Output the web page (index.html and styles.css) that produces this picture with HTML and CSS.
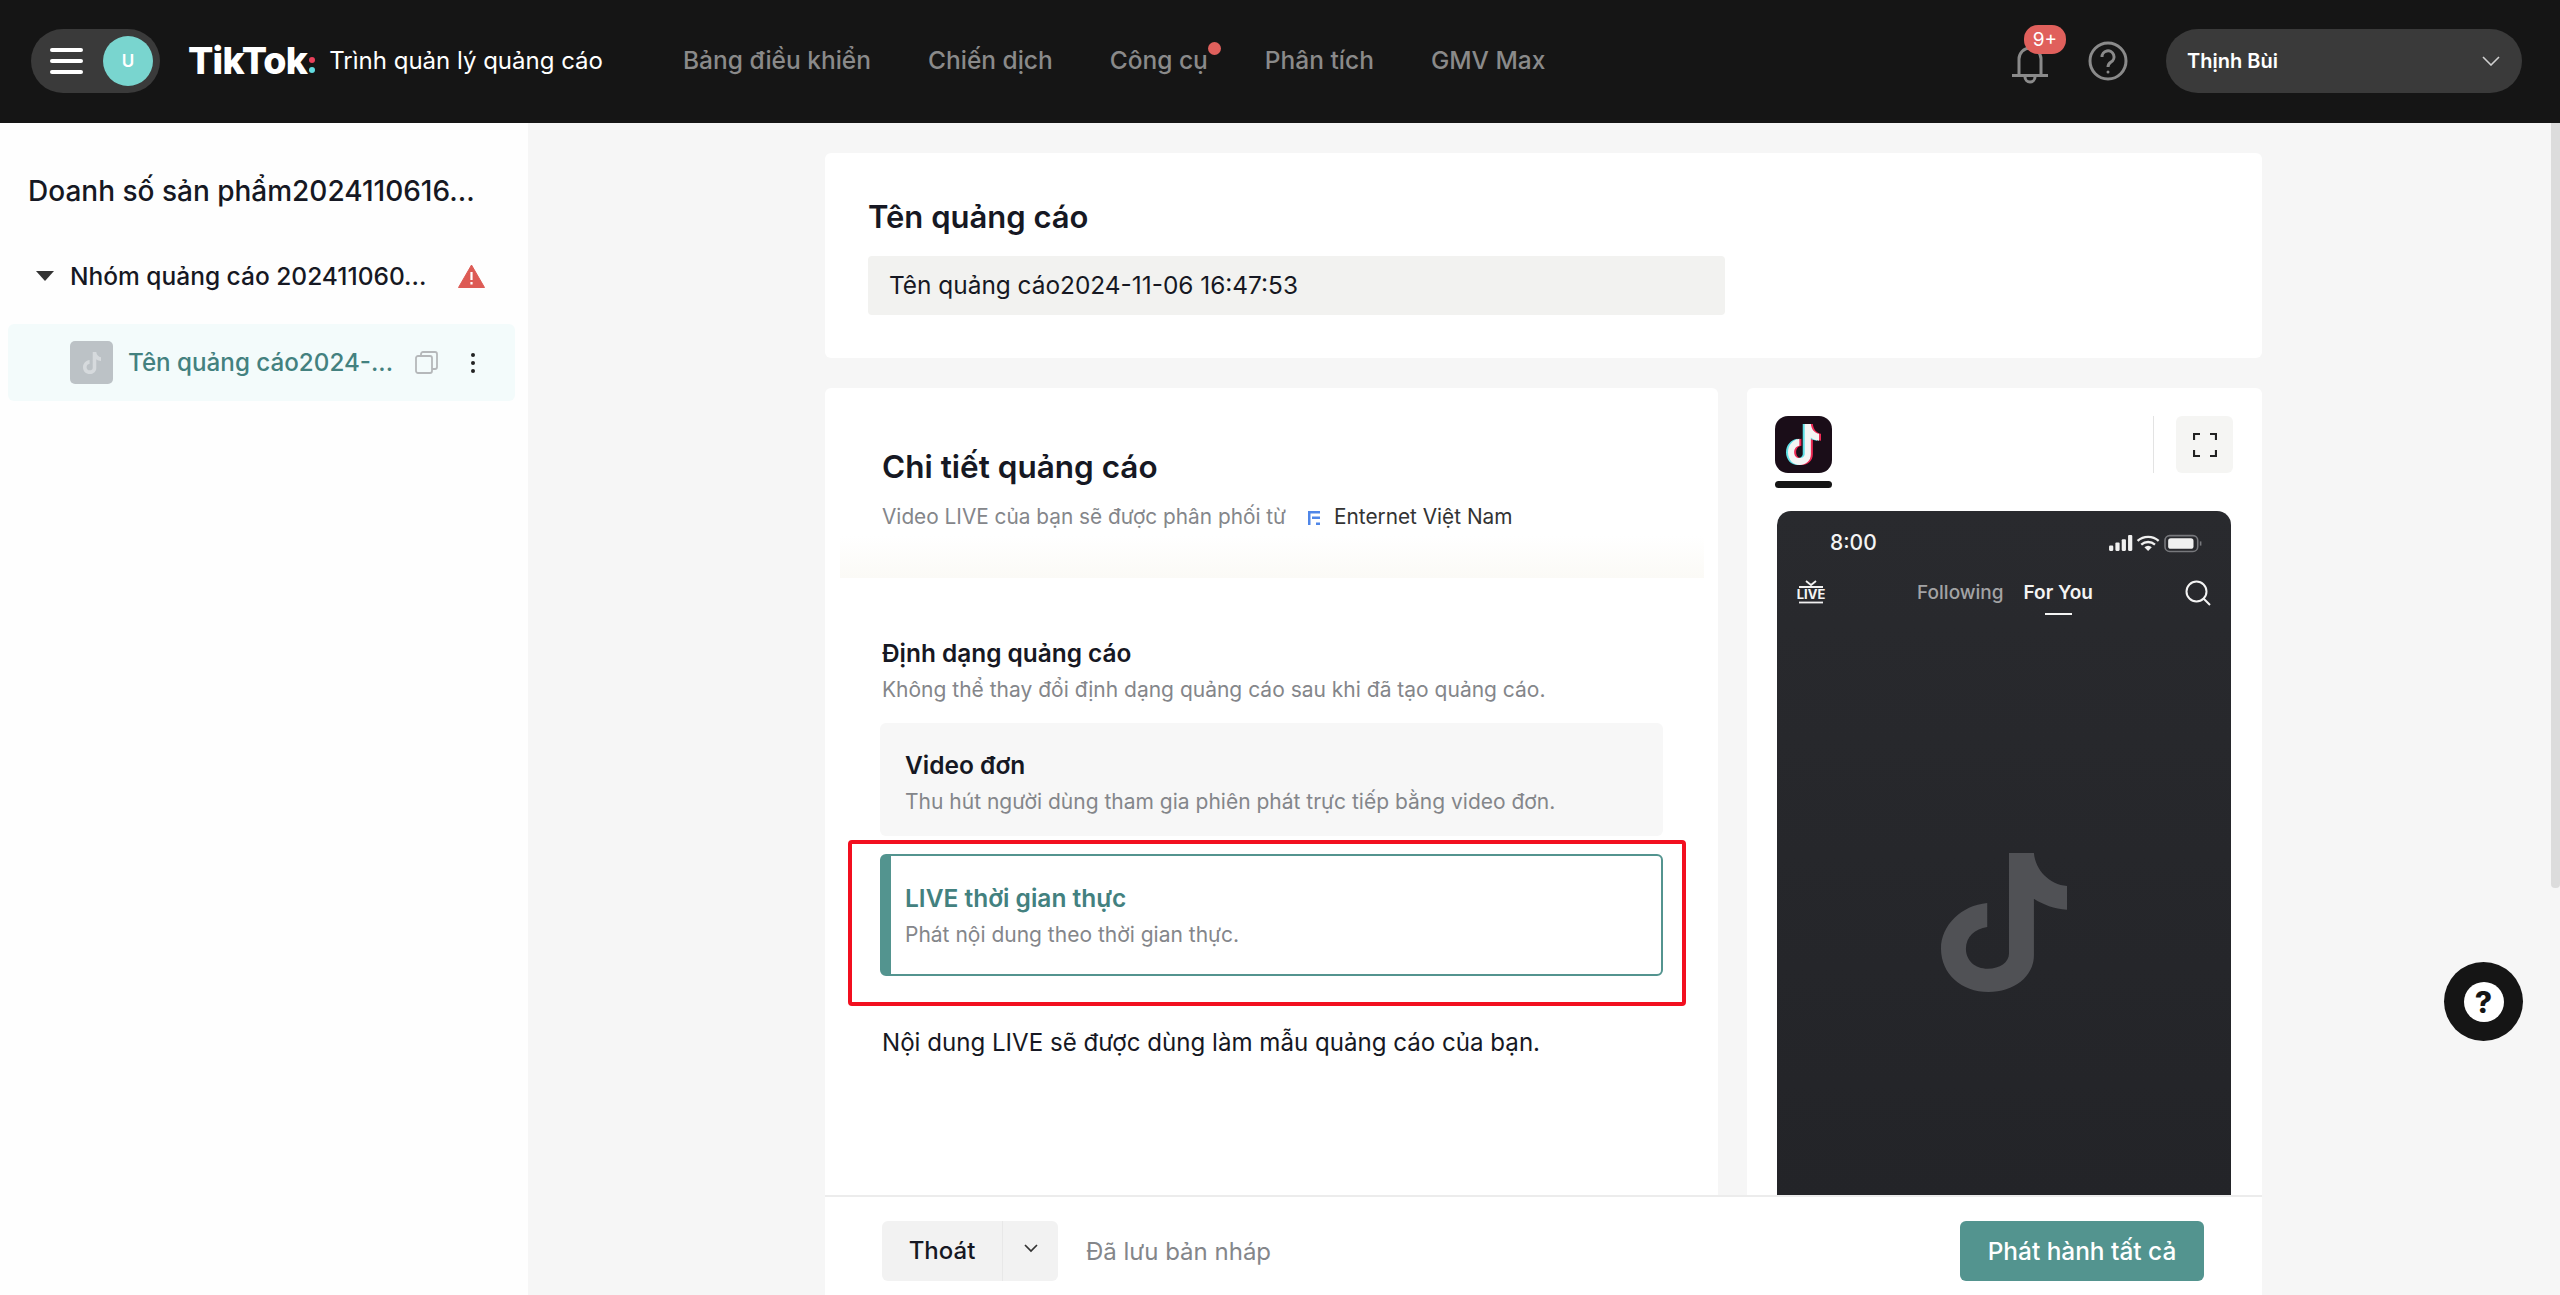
FILE: index.html
```html
<!DOCTYPE html>
<html>
  <head>
    <meta charset="UTF-8" />
    <title>TikTok: Trình quản lý quảng cáo</title>
    <link rel="stylesheet" href="styles.css">
  </head>
  <body>
    <svg class="sprite" width="0" height="0">
      <symbol id="note" viewBox="0 0 278 417" preserveAspectRatio="none">
        <path d="M150 0H205C208 52 240 95 278 99V170C250 167 225 155 205 137V307C205 372 160 417 105 417C45 417 0 362 0 287C0 217 45 157 102 150V222C75 227 55 252 55 287C55 322 75 347 103 347C130 347 150 327 150 302Z" />
      </symbol>
    </svg>

    <header class="topbar">
      <div class="topbar__pill">
        <div class="burger"><span></span><span></span><span></span></div>
        <div class="avatar">U</div>
      </div>
      <div class="brand">
        <span class="brand__logo">TikTok</span>
        <span class="brand__dots"><i></i><i></i></span>
        <span class="brand__text">Trình quản lý quảng cáo</span>
      </div>
      <nav class="nav">
        <a class="nav__item">Bảng điều khiển</a>
        <a class="nav__item">Chiến dịch</a>
        <a class="nav__item nav__item--dot">Công cụ</a>
        <a class="nav__item">Phân tích</a>
        <a class="nav__item">GMV Max</a>
      </nav>
      <div class="topbar__right">
        <div class="bell">
          <svg width="40" height="44" viewBox="0 0 40 44" fill="none" stroke="#8a8a8a" stroke-width="3">
            <path d="M9 33V17a11 11 0 0 1 22 0V33" />
            <path d="M2 33.5H38" />
            <path d="M15 35a5 5 0 0 0 10 0" />
          </svg>
          <span class="bell__badge">9+</span>
        </div>
        <svg class="help" width="40" height="40" viewBox="0 0 40 40" fill="none" stroke="#8a8a8a" stroke-width="3">
          <circle cx="20" cy="20" r="18" />
          <path d="M14 16a6 6 0 1 1 9 5c-2 1.300-3 2-3 5" />
          <circle cx="20" cy="31" r="1.500" fill="#8a8a8a" stroke="none" />
        </svg>
        <div class="user">
          <span class="user__name">Thịnh Bùi</span>
          <svg width="18" height="10" viewBox="0 0 18 10" fill="none" stroke="#d0d0d0" stroke-width="1.600"><path d="M1 1l8 8 8-8" /></svg>
        </div>
      </div>
    </header>

    <div class="page">
      <aside class="side">
        <h2 class="side__title">Doanh số sản phẩm2024110616...</h2>
        <div class="side__group">
          <span class="caret"></span>
          <span class="side__group-name">Nhóm quảng cáo 202411060...</span>
          <svg class="warn" width="27" height="24" viewBox="0 0 27 24">
            <path d="M13.500 1L26.500 23.500H.5Z" fill="#dd5b55" stroke="#dd5b55" stroke-linejoin="round" stroke-width="1" />
            <path d="M13.500 8v8M13.500 18v2.500" stroke="#fff" stroke-width="2.200" />
          </svg>
        </div>
        <div class="side__ad">
          <span class="side__thumb">
            <svg width="18" height="22" fill="#d6dadd"><use href="#note" /></svg>
          </span>
          <span class="side__ad-name">Tên quảng cáo2024-...</span>
          <svg class="side__copy" width="23" height="23" viewBox="0 0 23 23" fill="none" stroke="#b5b8ba" stroke-width="1.800">
            <rect x="1" y="5" width="16" height="17" rx="2" />
            <path d="M6 5V3a2 2 0 0 1 2-2h12a2 2 0 0 1 2 2v13a2 2 0 0 1-2 2h-3" />
          </svg>
          <span class="side__more"><i></i><i></i><i></i></span>
        </div>
      </aside>

      <main class="main">
        <div class="main__scroll">
          <section class="card card--name">
            <h2 class="card__title card__title--name">Tên quảng cáo</h2>
            <div class="field">Tên quảng cáo2024-11-06 16:47:53</div>
          </section>

          <div class="columns">
            <section class="card card--detail">
              <h2 class="card__title">Chi tiết quảng cáo</h2>
              <p class="detail__sub">
                <span>Video LIVE của bạn sẽ được phân phối từ</span>
                <svg class="detail__mark" width="14" height="16" viewBox="0 0 14 16" fill="#4f86e8">
                  <path d="M1 1h12v2.500H3.500V15H1zM5 6.500h8V9H5zM9 12.500h4V15H9z" />
                </svg>
                <span class="detail__org">Enternet Việt Nam</span>
              </p>
              <div class="detail__band"></div>
              <h3 class="detail__head">Định dạng quảng cáo</h3>
              <p class="detail__desc">Không thể thay đổi định dạng quảng cáo sau khi đã tạo quảng cáo.</p>
              <div class="option">
                <div class="option__name">Video đơn</div>
                <div class="option__desc">Thu hút người dùng tham gia phiên phát trực tiếp bằng video đơn.</div>
              </div>
              <div class="option option--active">
                <div class="option__name">LIVE thời gian thực</div>
                <div class="option__desc">Phát nội dung theo thời gian thực.</div>
                <div class="option__mark"></div>
              </div>
              <p class="detail__note">Nội dung LIVE sẽ được dùng làm mẫu quảng cáo của bạn.</p>
            </section>

            <section class="card card--preview">
              <div class="preview__bar">
                <div class="preview__tab">
                  <span class="app-icon">
                    <svg class="app-icon__red" width="31" height="41" fill="#ee2a55"><use href="#note" /></svg>
                    <svg class="app-icon__cyan" width="31" height="41" fill="#5fe0e6"><use href="#note" /></svg>
                    <svg class="app-icon__white" width="31" height="41" fill="#f4f4f4"><use href="#note" /></svg>
                  </span>
                  <span class="preview__underline"></span>
                </div>
                <div class="preview__tools">
                  <span class="preview__divider"></span>
                  <span class="expand">
                    <svg width="24" height="24" viewBox="0 0 24 24" fill="none" stroke="#222" stroke-width="2.200">
                      <path d="M1 7V1H7M17 1H23V7M23 17V23H17M7 23H1V17" />
                    </svg>
                  </span>
                </div>
              </div>
              <div class="phone">
                <div class="phone__status">
                  <span class="phone__time">8:00</span>
                  <svg width="95" height="19" viewBox="0 0 88 18" fill="#f0f0f0">
                    <rect x="0" y="11" width="4" height="5" rx="1" />
                    <rect x="6" y="8" width="4" height="8" rx="1" />
                    <rect x="12" y="5" width="4" height="11" rx="1" />
                    <rect x="18" y="1" width="4" height="15" rx="1" />
                    <path d="M27 6.500a15 15 0 0 1 20 0M30.500 10a10 10 0 0 1 13 0" fill="none" stroke="#f0f0f0" stroke-width="2.200" />
                    <path d="M37 16l-3.500-3.500a5 5 0 0 1 7 0z" />
                    <rect x="53" y="1.500" width="31" height="15" rx="4.500" fill="none" stroke="#77787c" stroke-width="1.500" />
                    <rect x="56" y="4" width="24" height="10" rx="2.500" />
                    <rect x="86" y="7" width="1.500" height="4" fill="#77787c" />
                  </svg>
                </div>
                <div class="phone__nav">
                  <span class="live-icon">
                    <svg width="28" height="8" viewBox="0 0 28 8" fill="none" stroke="#f0f0f0" stroke-width="1.800"><path d="M9 1l5 4 5-4M2 7h24" /></svg>
                    <span class="live-icon__text">LIVE</span>
                    <svg width="28" height="3" viewBox="0 0 28 3" fill="none" stroke="#f0f0f0" stroke-width="1.800"><path d="M2 1.500h24" /></svg>
                  </span>
                  <div class="phone__tabs">
                    <span class="phone__tab">Following</span>
                    <span class="phone__tab phone__tab--on">For You</span>
                  </div>
                  <svg width="26" height="26" viewBox="0 0 26 26" fill="none" stroke="#f4f4f4" stroke-width="2">
                    <circle cx="11.500" cy="11.500" r="10" />
                    <path d="M18.500 18.500L25 25" />
                  </svg>
                </div>
                <div class="phone__body">
                  <svg width="126" height="139" fill="#505155"><use href="#note" /></svg>
                </div>
              </div>
            </section>
          </div>
        </div>

        <footer class="footer">
          <div class="exit">
            <span class="exit__label">Thoát</span>
            <span class="exit__arrow">
              <svg width="14" height="9" viewBox="0 0 14 9" fill="none" stroke="#333" stroke-width="1.700"><path d="M1 1l6 6 6-6" /></svg>
            </span>
          </div>
          <span class="footer__saved">Đã lưu bản nháp</span>
          <button class="publish">Phát hành tất cả</button>
        </footer>
      </main>
    </div>

    <div class="scrollthumb"></div>
    <div class="helpdesk">
      <span class="helpdesk__mark">?</span>
    </div>
  </body>
</html>
```

FILE: styles.css
```css
:root {
  --color-dark: #151515;
  --color-pill: #3a3a3a;
  --color-nav: #8a8a8a;
  --color-main: #161823;
  --color-optional: #84868a;
  --color-teal: #53948f;
  --color-teal-text: #43817f;
  --color-bg: #f6f6f6;
}

* {
  box-sizing: border-box;
  margin: 0;
  padding: 0;
}

html,
body {
  height: 100%;
  overflow: hidden;
}

body {
  background-color: var(--color-bg);
  color: var(--color-main);
  font-family: Inter, "Noto Sans", sans-serif;
  display: flex;
  flex-direction: column;
}

.sprite {
  position: absolute;
}

/* top bar */
.topbar {
  height: 123px;
  flex-shrink: 0;
  background-color: var(--color-dark);
  display: flex;
  align-items: center;
  padding: 0 38px 2px 31px;
}

.topbar__pill {
  width: 129px;
  height: 64px;
  border-radius: 32px;
  background-color: var(--color-pill);
  display: flex;
  align-items: center;
  padding: 0 7px 0 19px;
  justify-content: space-between;
}

.burger {
  width: 33px;
  display: flex;
  flex-direction: column;
  gap: 7px;
}

.burger span {
  height: 4px;
  border-radius: 2px;
  background-color: #fff;
}

.avatar {
  width: 50px;
  height: 50px;
  border-radius: 50%;
  background-color: #79d5cf;
  color: #fff;
  font-size: 17px;
  font-weight: 600;
  display: flex;
  align-items: center;
  justify-content: center;
}

.brand {
  display: flex;
  align-items: center;
  margin-left: 28px;
  width: 495px;
}

.brand__logo {
  color: #fff;
  font-size: 37.5px;
  font-weight: 800;
  letter-spacing: -0.8px;
  line-height: 44px;
}

.brand__dots {
  display: flex;
  flex-direction: column;
  gap: 4px;
  margin: 8px 14px 0 2px;
}

.brand__dots i {
  width: 6px;
  height: 6px;
  border-radius: 50%;
  background-color: #e8405a;
}

.brand__dots i + i {
  background-color: #62dbe0;
}

.brand__text {
  color: #fff;
  font-size: 24px;
}

.nav {
  display: flex;
  align-items: center;
  gap: 57px;
  margin-top: -2px;
}

.nav__item {
  color: var(--color-nav);
  font-size: 24.5px;
  font-weight: 500;
  position: relative;
}

.nav__item--dot::after {
  content: "";
  position: absolute;
  width: 13px;
  height: 13px;
  border-radius: 50%;
  background-color: #e0605c;
  top: -3px;
  right: -13px;
}

.topbar__right {
  margin-left: auto;
  display: flex;
  align-items: center;
}

.bell {
  position: relative;
  width: 40px;
  height: 44px;
  margin-top: 6px;
}

.bell__badge {
  position: absolute;
  left: 14px;
  top: -17px;
  width: 42px;
  height: 29px;
  border-radius: 14px;
  background-color: #e0605c;
  color: #fff;
  font-size: 19px;
  line-height: 29px;
  text-align: center;
}

.help {
  margin-left: 38px;
}

.user {
  margin-left: 38px;
  width: 356px;
  height: 64px;
  border-radius: 32px;
  background-color: var(--color-pill);
  display: flex;
  align-items: center;
  justify-content: space-between;
  padding: 0 22px 0 21px;
}

.user__name {
  color: #fff;
  font-size: 20px;
  font-weight: 600;
}

/* sidebar */
.page {
  flex: 1;
  display: flex;
  min-height: 0;
}

.side {
  width: 528px;
  flex-shrink: 0;
  background-color: #fefefe;
  padding: 0 13px 0 8px;
}

.side__title {
  font-size: 28px;
  font-weight: 500;
  line-height: 34px;
  padding: 51px 0 0 20px;
  white-space: nowrap;
}

.side__group {
  display: flex;
  align-items: center;
  height: 40px;
  margin-top: 48px;
  padding-left: 28px;
}

.caret {
  width: 0;
  height: 0;
  border-left: 9px solid transparent;
  border-right: 9px solid transparent;
  border-top: 10px solid #333;
}

.side__group-name {
  font-size: 24.5px;
  font-weight: 500;
  margin-left: 16px;
  white-space: nowrap;
}

.warn {
  margin-left: auto;
  margin-right: 30px;
}

.side__ad {
  height: 77px;
  margin-top: 28px;
  background-color: #f3fbfb;
  border-radius: 6px;
  display: flex;
  align-items: center;
  padding-left: 62px;
}

.side__thumb {
  width: 43px;
  height: 43px;
  border-radius: 5px;
  background-color: #bcc2c6;
  display: flex;
  align-items: center;
  justify-content: center;
}

.side__ad-name {
  color: var(--color-teal-text);
  font-size: 24.2px;
  font-weight: 500;
  margin-left: 15px;
  white-space: nowrap;
}

.side__copy {
  margin-left: auto;
}

.side__more {
  display: flex;
  flex-direction: column;
  gap: 4px;
  margin: 0 40px 0 33px;
}

.side__more i {
  width: 4px;
  height: 4px;
  border-radius: 50%;
  background-color: #222;
}

/* main column */
.main {
  width: 1437px;
  margin-left: 297px;
  display: flex;
  flex-direction: column;
  min-height: 0;
}

.main__scroll {
  flex: 1;
  min-height: 0;
  overflow: hidden;
  padding-top: 30px;
}

.card {
  background-color: #fff;
  border-radius: 6px;
}

.card__title {
  font-size: 31.5px;
  font-weight: 600;
  line-height: 40px;
}

.card__title--name {
  font-size: 31px;
}

.card--name {
  height: 205px;
  padding: 44px 43px 0;
}

.field {
  margin-top: 19px;
  width: 857px;
  height: 59px;
  border-radius: 4px;
  background-color: #f2f2f0;
  font-size: 24.4px;
  line-height: 59px;
  padding-left: 21px;
}

.columns {
  display: flex;
  gap: 29px;
  margin-top: 30px;
  align-items: flex-start;
}

.card--detail {
  width: 893px;
  height: 900px;
  padding: 59px 0 0 57px;
  position: relative;
}

.detail__sub {
  margin-top: 14px;
  font-size: 20.8px;
  line-height: 32px;
  color: var(--color-optional);
  display: flex;
  align-items: center;
}

.detail__mark {
  margin: 2px 13px 0 21px;
}

.detail__org {
  color: #333;
}

.detail__band {
  height: 42px;
  margin: 3px 14px 0 -42px;
  background: linear-gradient(#fff, #fbfaf6);
}

.detail__head {
  font-size: 24.4px;
  font-weight: 600;
  line-height: 32px;
  margin-top: 59px;
}

.detail__desc {
  font-size: 21px;
  line-height: 30px;
  margin-top: 6px;
  color: var(--color-optional);
}

.option {
  width: 783px;
  height: 113px;
  margin-top: 18px;
  margin-left: -2px;
  border-radius: 6px;
  background-color: #f7f7f7;
  padding: 26px 0 0 25px;
}

.option__name {
  font-size: 24.5px;
  font-weight: 600;
  line-height: 32px;
}

.option__desc {
  font-size: 21px;
  line-height: 30px;
  margin-top: 6px;
  color: var(--color-optional);
}

.option--active {
  position: relative;
  height: 122px;
  background-color: #fff;
  border: 2px solid var(--color-teal);
  border-left-width: 11px;
  padding: 26px 0 0 14px;
}

.option--active .option__name {
  color: var(--color-teal-text);
}

/* the red box someone drew on the screenshot */
.option__mark {
  position: absolute;
  left: -43px;
  top: -16px;
  right: -25px;
  bottom: -32px;
  border: 4px solid #f20f1f;
  border-radius: 4px;
}

.detail__note {
  font-size: 24.1px;
  line-height: 32px;
  margin-top: 51px;
}

/* preview */
.card--preview {
  width: 515px;
  height: 900px;
  padding: 28px 29px 0 28px;
}

.preview__bar {
  display: flex;
  justify-content: space-between;
}

.preview__tab {
  width: 57px;
}

.app-icon {
  width: 57px;
  height: 57px;
  border-radius: 13px;
  background-color: #1a0d18;
  display: block;
  position: relative;
}

.app-icon svg {
  position: absolute;
  top: 8px;
}

.app-icon__red {
  left: 15px;
}

.app-icon__cyan {
  left: 11px;
}

.app-icon__white {
  left: 13px;
}

.preview__underline {
  display: block;
  height: 7px;
  border-radius: 4px;
  margin-top: 8px;
  background-color: var(--color-dark);
}

.preview__tools {
  display: flex;
  gap: 22px;
}

.preview__divider {
  width: 1px;
  height: 57px;
  background-color: #e3e3e3;
}

.expand {
  width: 57px;
  height: 57px;
  border-radius: 6px;
  background-color: #f5f5f3;
  display: flex;
  align-items: center;
  justify-content: center;
}

.phone {
  margin-top: 23px;
  margin-left: 2px;
  width: 454px;
  height: 800px;
  border-radius: 14px 14px 0 0;
  background: linear-gradient(#292a2e, #222327);
  color: #f4f4f4;
}

.phone__status {
  display: flex;
  align-items: center;
  justify-content: space-between;
  padding: 18px 28px 0 53px;
}

.phone__time {
  font-size: 21px;
  font-weight: 500;
  line-height: 28px;
}

.phone__nav {
  display: flex;
  align-items: flex-start;
  justify-content: space-between;
  margin-top: 23px;
  padding: 0 20px;
  height: 50px;
}

.live-icon {
  display: flex;
  flex-direction: column;
  align-items: center;
  width: 28px;
}

.live-icon__text {
  font-size: 13px;
  font-weight: 700;
  line-height: 13px;
}

.phone__tabs {
  display: flex;
  gap: 20px;
}

.phone__tab {
  font-size: 19px;
  line-height: 26px;
  font-weight: 500;
  color: #a3a3a5;
  position: relative;
}

.phone__tab--on {
  color: #f4f4f4;
  font-weight: 600;
}

.phone__tab--on::after {
  content: "";
  position: absolute;
  left: 21px;
  right: 21px;
  bottom: -9px;
  height: 2px;
  background-color: #f4f4f4;
}

.phone__body {
  display: flex;
  justify-content: center;
  padding: 223px 0 0 0;
}

/* footer */
.footer {
  height: 100px;
  flex-shrink: 0;
  background-color: #fff;
  border-top: 2px solid #ececec;
  display: flex;
  align-items: center;
  padding: 10px 58px 0 57px;
}

.exit {
  display: flex;
  height: 60px;
  width: 176px;
  border-radius: 6px;
  background-color: #f2f2f2;
}

.exit__label {
  width: 121px;
  font-size: 24px;
  font-weight: 500;
  line-height: 60px;
  text-align: center;
  border-right: 1px solid #e8e8e8;
}

.exit__arrow {
  flex: 1;
  display: flex;
  align-items: center;
  justify-content: center;
  padding-bottom: 6px;
}

.footer__saved {
  margin-left: 28px;
  font-size: 24px;
  color: var(--color-optional);
}

.publish {
  margin-left: auto;
  width: 244px;
  height: 60px;
  border: none;
  border-radius: 6px;
  background-color: var(--color-teal);
  color: #fff;
  font-family: inherit;
  font-size: 24.4px;
  font-weight: 500;
}

/* things floating over the page */
.scrollthumb {
  position: absolute;
  right: 0;
  top: 123px;
  width: 9px;
  height: 765px;
  border-radius: 0 0 4px 4px;
  background-color: #dcdcdc;
}

.helpdesk {
  position: absolute;
  left: 2444px;
  top: 962px;
  width: 79px;
  height: 79px;
  border-radius: 50%;
  background-color: var(--color-dark);
  display: flex;
  align-items: center;
  justify-content: center;
}

.helpdesk__mark {
  width: 40px;
  height: 40px;
  border-radius: 50%;
  background-color: #fff;
  color: var(--color-dark);
  font-size: 30px;
  font-weight: 800;
  line-height: 40px;
  text-align: center;
}
```
